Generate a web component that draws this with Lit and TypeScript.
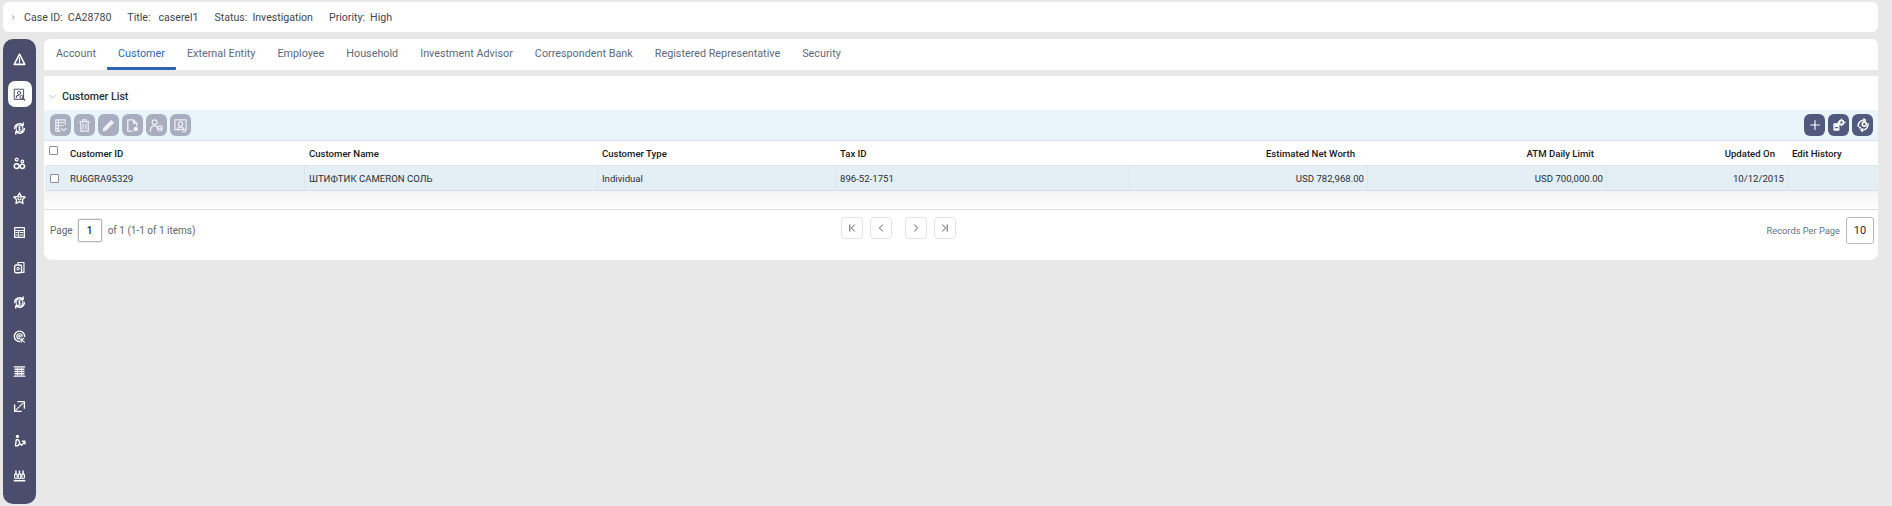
import { LitElement, html, css, svg } from "lit";
import { customElement } from "lit/decorators.js";

const s = (body: unknown, size = 16, vb = 16) => html`<svg width=${size} height=${size} viewBox="0 0 ${vb} ${vb}" fill="none" stroke="currentColor" stroke-width="1.3" stroke-linecap="round" stroke-linejoin="round">${body}</svg>`;

const coin = svg`<circle cx="8" cy="8" r="4.200" stroke-width="1.300"/><path d="M2 8a6 6 0 0 1 10-4.400M14 8a6 6 0 0 1-10 4.400M12.600 1.200v2.800H9.800M3.400 14.800V12h2.800" stroke-width="1.600"/><path d="M9.600 6.300C8.700 5.600 6.600 5.800 6.600 7c0 1.500 3 .8 3 2.200 0 1.100-2.100 1.200-3.100.5M8 5v6" stroke-width="1"/>`;

const sideIcons = [
  svg`<path d="M8 1.500 14.500 14h-13Z" stroke-width="1.900"/><path d="M8 6v4M8 11.300v1" stroke-width="1.500"/>`,
  svg`<rect x="2" y="1.500" width="11" height="12.500" stroke-width="1.200"/><circle cx="7.500" cy="6" r="2" stroke-width="1.200"/><path d="M4 12c0-2 1.500-3 3-3"/><circle cx="10.500" cy="11" r="2" stroke-width="1.200"/><path d="M12 12.500 14.500 14.800" stroke-width="1.400"/>`,
  coin,
  svg`<circle cx="4.500" cy="3.200" r="1.700" stroke-width="1.500"/><circle cx="11.500" cy="5.500" r="1.600" stroke-width="1.500"/><circle cx="4.500" cy="11.200" r="3" stroke-width="1.900"/><circle cx="11.500" cy="11.500" r="2.700" stroke-width="1.900"/>`,
  svg`<path d="m8 1.200 2.200 4.200 4.700.7-3.400 3.300.8 4.700L8 11.900l-4.300 2.200.8-4.700L1.100 6.100l4.700-.7Z" stroke-width="1.700"/><circle cx="8" cy="7.800" r="2" stroke-width="1.300"/>`,
  svg`<rect x="2" y="2" width="12" height="12" stroke-width="1.500"/><path d="M2 5.500h12M7 5.500V14M9 8h3.500M9 11h3.500M3.500 8h2M3.500 11h2" stroke-width="1.300"/>`,
  svg`<path d="M6 4V1.800h7.500V14H11" stroke-width="1.400"/><rect x="2" y="5" width="8.500" height="9.500" rx="2" stroke-width="1.700"/><circle cx="6.200" cy="9.500" r="1.600" stroke-width="1.200"/>`,
  coin,
  svg`<path d="M8 14.200A6.400 6.400 0 1 1 14.400 7.800" stroke-width="1.700"/><path d="M8 11A3.200 3.200 0 1 1 11.200 7.800" stroke-width="1.500"/><circle cx="8" cy="7.800" r="1"/><path d="M10 10v5M10.500 12.500l3-2.500M11 12.500l3 2.500" stroke-width="1.400"/>`,
  svg`<path d="M1.500 2.300h13M1.500 13.700h13" stroke-width="1.700"/><path d="M2.500 5.300h11M2.500 8h11M2.500 10.700h11" stroke-width="1.700"/><path d="M5.500 3v10M10.500 3v10" stroke-width=".8"/>`,
  svg`<path d="M6 2h8v8M10 14H2V6" stroke-width="1.700"/><path d="m3.500 12.500 9-9" stroke-width="1.400" stroke-dasharray="2 1.400"/>`,
  svg`<circle cx="5.500" cy="3" r="2" fill="currentColor" stroke="none"/><path d="M4 7h2.500l1.500 3M4 7 3 14.500h3l2-3 2.500 2.500L14.500 9.500M11.500 9h3.200v3.200" stroke-width="1.700"/>`,
  svg`<path d="M1.500 14.500h13" stroke-width="1.800"/><rect x="2" y="6" width="3.200" height="6" rx="1.500" stroke-width="1.500"/><rect x="6.400" y="6" width="3.200" height="6" rx="1.500" stroke-width="1.500"/><rect x="10.800" y="6" width="3.200" height="6" rx="1.500" stroke-width="1.500"/><path d="M3.600 6V2.500M8 6V2.500M12.400 6V2.500" stroke-width="1.700"/>`,
];

const toolIcons = [
  svg`<path d="M13 7V2H3v12h4.500" stroke-width="1.200"/><path d="M6 2v12M3 5h3M3 8h3M3 11h3M8 5h3M8 8h3"/><path d="m9 11 2.500 2.500L14 11" stroke-width="1.200"/>`,
  svg`<path d="M2.500 4h11M6 4V2h4v2M4 4v10h8V4M6.500 6.500v5M9.500 6.500v5" stroke-width="1.300"/>`,
  svg`<path d="M2.500 13.500 3 10.500 11 2.500l2.500 2.500-8 8Z" fill="currentColor" stroke-width="1"/>`,
  svg`<path d="M7.500 14H3V2h6l3.500 3.500V8M9 2v3.500h3.500" stroke-width="1.400"/><circle cx="11.500" cy="11.800" r="2.400" fill="currentColor" stroke="none"/>`,
  svg`<circle cx="6" cy="4.500" r="2.600" stroke-width="1.300"/><path d="M1.500 14c0-3.500 2-5.500 4.500-5.500 1 0 1.700.3 2.300.7" stroke-width="1.300"/><circle cx="11.500" cy="11" r="2.600" stroke-width="1.300"/><path d="M10.200 11h2.600" stroke-width="1.200"/>`,
  svg`<rect x="2" y="2" width="12" height="10.500" stroke-width="1.300"/><circle cx="8" cy="6.500" r="2.300"/><path d="M5 12c0-1.500 1.300-2.500 3-2.500s3 1 3 2.500"/><path d="M10.500 14.500h4" stroke-dasharray="1 1"/>`,
];

const addIcons = [
  svg`<path d="M8 3v10M3 8h10" stroke-width="1.300"/>`,
  svg`<path d="M2.500 6.500H8v7.500H2.500Z" fill="currentColor" stroke-width="1"/><path d="M4 11h2.500" stroke="#51597f" stroke-width="1.200"/><circle cx="10.800" cy="5" r="2.400" stroke-width="2"/><path d="M10.800 1.200v.8M10.800 8v.8M14.500 5h.5M7 5h.5" stroke-width="1.400"/>`,
  svg`<circle cx="9.500" cy="7" r="2.300" stroke-width="1.800"/><path d="M2.500 9.500C2.300 6 4.800 2.500 9 2.300M13.800 6.500c.6 4-2.800 7.500-7 7.200" stroke-width="1.700"/><path d="M9 .8 11 2.500 9 4M7.500 12l-2 1.700 2 1.700" stroke-width="1.300"/><circle cx="4.500" cy="11" r="1.200" fill="currentColor" stroke="none"/>`,
];

@customElement("app-root")
export class AppRoot extends LitElement {
  static styles = css`
    :host { display: block; height: 506px; overflow: hidden; background: #e8e8e8; font-family: Roboto, "Noto Sans", sans-serif; font-size: 9.600px; color: #2b2b2b; }
    .page { display: flex; flex-direction: column; gap: 7px; padding: 2px 14px 0 3px; }
    .case { height: 30px; background: #fff; border-radius: 6px; display: flex; align-items: center; color: #3f4650; font-size: 10.600px; }
    .case svg { margin: 0 7px 0 7px; }
    .case .f { display: flex; gap: 5px; margin-right: 16px; }
    .case .t { gap: 8px; }
    .main { display: flex; gap: 8px; }
    .side { width: 33px; height: 465px; box-sizing: border-box; background: #4a4d6b; border-radius: 10px; padding-top: 3px; display: flex; flex-direction: column; align-items: center; color: #fff; }
    .nav { width: 24px; height: 34.700px; display: flex; align-items: center; justify-content: center; position: relative; z-index: 0; }
    .nav.on { color: #4a4d6b; }
    .nav.on::before { content: ""; position: absolute; left: 0; right: 0; top: 4px; bottom: 4.700px; background: #fff; border-radius: 7px; z-index: -1; }
    .content { flex: 1; min-width: 0; display: flex; flex-direction: column; gap: 6px; }
    .tabs { flex: none; height: 31px; background: #fff; display: flex; padding-left: 1px; border-radius: 6px 6px 0 0; }
    .tab { padding: 0 11px; display: flex; align-items: center; height: 28px; color: #5b6b80; font-size: 10.800px; border-bottom: 3px solid transparent; border-radius: 1px; white-space: nowrap; }
    .tab.on { color: #2c6cb5; border-bottom-color: #2b66b5; }
    .panel { height: 184px; background: #fff; border-radius: 0 0 8px 8px; display: flex; flex-direction: column; }
    .title { flex: none; height: 34px; display: flex; align-items: center; font-weight: 500; font-size: 10.600px; color: #2b2f36; gap: 5px; padding-left: 4px; padding-top: 6px; box-sizing: border-box; }
    .title svg { color: #9aa0a8; }
    .bar { flex: none; height: 31px; box-sizing: border-box; background: #eaf5fb; display: flex; align-items: center; justify-content: space-between; padding: 0 5px 0 6px; border-bottom: 1px solid #dbe6ec; }
    .btns { display: flex; gap: 3px; }
    .tb { width: 21px; height: 22px; border-radius: 6px; background: #a9adc0; color: #f0f1f5; display: flex; align-items: center; justify-content: center; }
    .tb.dark { background: #51597f; color: #fff; }
    .grid { flex: none; display: grid; grid-template-columns: 21px 239px 293px 238px 294px 238px 239px 181px 1fr; margin-left: 1px; }
    .hc { height: 24px; display: flex; align-items: center; padding-left: 4px; font-weight: 500; font-size: 9.600px; color: #16181c; border-bottom: 1px solid #dfe6ea; white-space: nowrap; }
    .hc.r { justify-content: flex-end; padding-right: 13px; padding-left: 0; }
    .dc { height: 24px; display: flex; align-items: center; padding-left: 4px; background: #e3eef5; border-bottom: 1px solid #d7dfe4; border-right: 1px solid #dbe6ed; color: #2b2f36; white-space: nowrap; }
    .dc.r { justify-content: flex-end; padding-right: 3px; padding-left: 0; }
    .dc.first { border-right: 0; }
    .dc.end { border-right: 0; }
    .cb { width: 7px; height: 7px; border: 1px solid #8a8f96; border-radius: 1px; background: #fff; display: block; }
    .hc.c { padding-left: 4px; align-items: flex-start; padding-top: 5px; height: 19px; }
    .dc.c { padding-left: 5px; }
    .blank { flex: none; height: 18px; background: linear-gradient(#f3f3f3, #fff); border-bottom: 1px solid #dcdfe2; }
    .pager { flex: 1; display: grid; grid-template-columns: 791px auto 1fr; padding: 7px 6px 0 6px; align-items: start; color: #5e6670; }
    .pl { display: flex; align-items: center; gap: 5px; height: 26px; font-size: 10px; }
    .pi { width: 22px; height: 21px; border: 1px solid #b9b3b3; background: #fff; border-radius: 2px; display: flex; align-items: center; justify-content: center; color: #222; font-weight: 500; box-shadow: 0 0 0 1px #ececec; margin-right: 1px; }
    .pm { display: flex; }
    .pb { width: 20px; height: 20px; border: 1px solid #e1e3e5; border-radius: 4px; display: flex; align-items: center; justify-content: center; color: #2a323c; margin-right: 7px; }
    .pb.gap { margin-right: 13px; }
    .pb:last-child { margin-right: 0; }
    .pr { display: flex; justify-content: flex-end; align-items: center; gap: 6px; font-size: 9.300px; color: #6a727c; margin-right: -2px; }
    .ps { width: 26px; height: 25px; border: 1px solid #b5b8bb; border-radius: 3px; display: flex; align-items: center; justify-content: center; color: #2b2b2b; font-size: 11px; }
  `;

  render() {
    const tabs = ["Account", "Customer", "External Entity", "Employee", "Household", "Investment Advisor", "Correspondent Bank", "Registered Representative", "Security"];
    const heads: [string, boolean][] = [["Customer ID", false], ["Customer Name", false], ["Customer Type", false], ["Tax ID", false], ["Estimated Net Worth", true], ["ATM Daily Limit", true], ["Updated On", true]];
    const cells: [string, string][] = [["RU6GRA95329", ""], ["ШТИФТИК CAMERON СОЛЬ", ""], ["Individual", ""], ["896-52-1751", ""], ["USD 782,968.00", "r"], ["USD 700,000.00", "r"], ["10/12/2015", "r"], ["", "end"]];
    return html`<div class="page">
      <div class="case">
        ${s(svg`<path d="m6 4 3 4-3 4" stroke-width="1.400"/>`, 7)}
        <div class="f"><span>Case ID:</span><span>CA28780</span></div>
        <div class="f t"><span>Title:</span><span>caserel1</span></div>
        <div class="f"><span>Status:</span><span>Investigation</span></div>
        <div class="f"><span>Priority:</span><span>High</span></div>
      </div>
      <div class="main">
        <nav class="side">
          ${sideIcons.map((i, n) => html`<div class="nav ${n === 1 ? "on" : ""}">${s(i, 13)}</div>`)}
        </nav>
        <div class="content">
          <div class="tabs">${tabs.map((t, i) => html`<div class="tab ${i === 1 ? "on" : ""}">${t}</div>`)}</div>
          <div class="panel">
            <div class="title">${s(svg`<path d="m3 6 5 5 5-5" stroke-width="1.200"/>`, 9)}<span>Customer List</span></div>
            <div class="bar">
              <div class="btns">${toolIcons.map((i) => html`<div class="tb">${s(i, 15)}</div>`)}</div>
              <div class="btns">${addIcons.map((i) => html`<div class="tb dark">${s(i, 14)}</div>`)}</div>
            </div>
            <div class="grid">
              <div class="hc c"><span class="cb"></span></div>
              ${heads.map(([t, r]) => html`<div class="hc ${r ? "r" : ""}">${t}</div>`)}
              <div class="hc">Edit History</div>
              <div class="dc first c"><span class="cb"></span></div>
              ${cells.map(([t, c]) => html`<div class="dc ${c}">${t}</div>`)}
            </div>
            <div class="blank"></div>
            <div class="pager">
              <div class="pl"><span>Page</span><span class="pi">1</span><span>of 1 (1-1 of 1 items)</span></div>
              <div class="pm">
                <div class="pb">${s(svg`<path d="M4.500 3v10M12 3 7 8l5 5" stroke-width="1.300"/>`, 10)}</div>
                <div class="pb gap">${s(svg`<path d="M10.500 3 5.500 8l5 5" stroke-width="1.300"/>`, 10)}</div>
                <div class="pb">${s(svg`<path d="m5.500 3 5 5-5 5" stroke-width="1.300"/>`, 10)}</div>
                <div class="pb">${s(svg`<path d="M11.500 3v10M4 3l5 5-5 5" stroke-width="1.300"/>`, 10)}</div>
              </div>
              <div class="pr"><span>Records Per Page</span><span class="ps">10</span></div>
            </div>
          </div>
        </div>
      </div>
    </div>`;
  }
}
